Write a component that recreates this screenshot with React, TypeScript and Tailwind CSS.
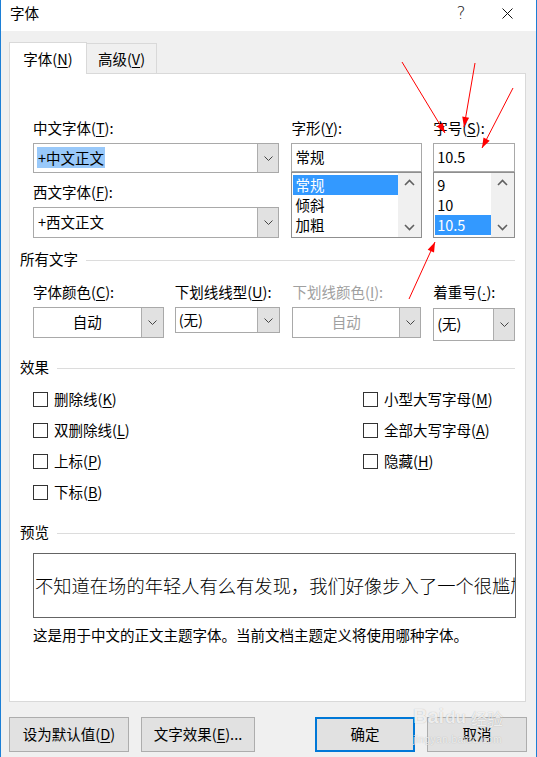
import React from 'react'

const ARROWS: [number, number, number, number][] = [
  [401, 62, 444, 133],
  [474, 63, 463, 127],
  [512, 88, 481, 148],
  [408, 299, 434, 242],
]

function arrowHead(x1: number, y1: number, x2: number, y2: number) {
  const a = Math.atan2(y2 - y1, x2 - x1)
  const len = 10
  const half = 3.5
  const bx = x2 - len * Math.cos(a)
  const by = y2 - len * Math.sin(a)
  const px = -Math.sin(a) * half
  const py = Math.cos(a) * half
  return `${x2},${y2} ${bx + px},${by + py} ${bx - px},${by - py}`
}

function Chevron({ color = '#444' }: { color?: string }) {
  return (
    <svg width="9" height="5" viewBox="0 0 9 5">
      <polyline points="0.5,0.5 4.5,4.5 8.5,0.5" fill="none" stroke={color} strokeWidth="1" />
    </svg>
  )
}

function ScrollArrow({ up }: { up?: boolean }) {
  return (
    <svg width="11" height="7" viewBox="0 0 11 7">
      <polyline
        points={up ? '1,6 5.5,1.5 10,6' : '1,1 5.5,5.5 10,1'}
        fill="none"
        stroke="#606060"
        strokeWidth="1.6"
      />
    </svg>
  )
}

function U({ children }: { children: React.ReactNode }) {
  return <span className="underline underline-offset-2">{children}</span>
}

interface ComboProps {
  className: string
  btn: string
  children?: React.ReactNode
  center?: boolean
  muted?: boolean
}

function Combo({ className, btn, children, center, muted }: ComboProps) {
  return (
    <div className={`flex border border-[#a9a9a9] bg-white ${className}`}>
      <div
        className={`flex-1 flex items-center overflow-hidden pb-px ${center ? 'justify-center' : 'pl-[3px]'} ${
          muted ? 'text-[#a0a0a0]' : ''
        }`}
      >
        {children}
      </div>
      <div className={`flex items-center justify-center border-l border-[#adadad] bg-[#e1e1e1] ${btn}`}>
        <Chevron />
      </div>
    </div>
  )
}

function ListBox({ items, selected, itemW }: { items: string[]; selected: number; itemW: string }) {
  return (
    <div className="flex h-[66px] border border-[#8f8f8f] bg-white">
      <div className={`pt-[2px] pl-px ${itemW}`}>
        {items.map((it, i) => (
          <div
            key={it}
            className={`h-5 leading-[19px] pl-[2px] ${i === selected ? 'bg-[#3399ff] text-white' : ''}`}
          >
            {it}
          </div>
        ))}
      </div>
      <div className="flex-1 flex flex-col items-center justify-between py-[6px] bg-[#f0f0f0]">
        <ScrollArrow up />
        <ScrollArrow />
      </div>
    </div>
  )
}

function Section({ title }: { title: string }) {
  return (
    <div className="flex items-center h-5">
      <span className="leading-[18px] pb-[2px]">{title}</span>
      <div className="ml-2 flex-1 h-px bg-[#dcdcdc]" />
    </div>
  )
}

function Check({ children }: { children: React.ReactNode }) {
  return (
    <div className="flex items-center h-[31px]">
      <div className="w-[15px] h-[15px] border border-[#333] bg-white" />
      <span className="ml-[6px] pb-[2px]">{children}</span>
    </div>
  )
}

function Btn({ className, children }: { className: string; children: React.ReactNode }) {
  return (
    <div className={`flex items-center justify-center h-[35px] pb-[2px] bg-[#e1e1e1] ${className}`}>
      {children}
    </div>
  )
}

export default function App() {
  return (
    <div className="relative w-[537px] h-[757px] overflow-hidden bg-[#f0f0f0] border-x border-[#1c7fd6] font-['Noto_Sans_CJK_SC',sans-serif] text-[14.5px] leading-5 text-black">
      {/* Title bar */}
      <div className="flex items-center h-[31px] bg-white">
        <span className="ml-[9px] pb-[6px]">字体</span>
        <div className="flex-1" />
        <span className="w-[46px] text-center text-[17px] font-['DejaVu_Sans',sans-serif] font-light pb-[6px] text-[#222]">
          ?
        </span>
        <div className="w-[46px] flex justify-center pb-[5px] mr-[6px]">
          <svg width="11" height="11" viewBox="0 0 11 11">
            <line x1="0.5" y1="0.5" x2="10.5" y2="10.5" stroke="#111" strokeWidth="1" />
            <line x1="10.5" y1="0.5" x2="0.5" y2="10.5" stroke="#111" strokeWidth="1" />
          </svg>
        </div>
      </div>

      {/* Tabs */}
      <div className="ml-[8px] mt-[11px] -mb-px flex items-start h-[32px]">
        <div className="relative z-10 w-[78px] h-[32px] flex justify-center pt-[6px] bg-white border-x border-t border-[#d9d9d9]">
          字体(<U>N</U>)
        </div>
        <div className="mt-px w-[70px] h-[30px] flex justify-center pt-[5px] border-r border-t border-[#d9d9d9]">
          高级(<U>V</U>)
        </div>
      </div>

      {/* Panel */}
      <div className="ml-[8px] w-[517px] h-[629px] border border-[#d9d9d9] bg-white px-[10px] pt-[44px]">
        {/* Fonts row */}
        <div className="ml-[13px] flex">
          <div className="w-[247px]">
            <div>中文字体(<U>T</U>):</div>
            <Combo className="mt-[5px] h-[30px]" btn="w-[21px]">
              <span className="bg-[#99c9fa] px-px leading-[21px]">+中文正文</span>
            </Combo>
            <div className="mt-[9px]">西文字体(<U>F</U>):</div>
            <Combo className="mt-[5px] h-[31px]" btn="w-[21px]">
              <span className="px-px">+西文正文</span>
            </Combo>
          </div>
          <div className="ml-[12px] w-[131px]">
            <div>字形(<U>Y</U>):</div>
            <div className="mt-[5px] h-[29px] border border-[#a9a9a9] flex items-center pl-[3px] pb-px">常规</div>
            <ListBox items={['常规', '倾斜', '加粗']} selected={0} itemW="w-[106px]" />
          </div>
          <div className="ml-[11px] w-[82px]">
            <div>字号(<U>S</U>):</div>
            <div className="mt-[5px] h-[29px] border border-[#a9a9a9] flex items-center pl-[3px] pb-px">10.5</div>
            <ListBox items={['9', '10', '10.5']} selected={2} itemW="w-[57px]" />
          </div>
        </div>

        {/* All text */}
        <div className="mt-[12px]">
          <Section title="所有文字" />
        </div>
        <div className="ml-[13px] mt-[12px] flex items-start">
          <div className="w-[131px]">
            <div>字体颜色(<U>C</U>):</div>
            <Combo className="mt-[5px] h-[31px]" btn="w-[22px]" center>
              自动
            </Combo>
          </div>
          <div className="ml-[11px] w-[106px]">
            <div className="whitespace-nowrap">下划线线型(<U>U</U>):</div>
            <Combo className="mt-[5px] h-[26px]" btn="w-[22px]">
              (无)
            </Combo>
          </div>
          <div className="ml-[12px] w-[129px]">
            <div className="text-[#a0a0a0] whitespace-nowrap">下划线颜色(<U>I</U>):</div>
            <Combo className="mt-[5px] h-[31px]" btn="w-[21px]" center muted>
              自动
            </Combo>
          </div>
          <div className="ml-[12px] w-[82px]">
            <div>
              着重号(<U><span className="font-['Liberation_Sans',sans-serif]">·</span></U>):
            </div>
            <Combo className="mt-[5px] h-[33px] border-[#8a8a8a]" btn="w-[21px]">
              (无)
            </Combo>
          </div>
        </div>

        {/* Effects */}
        <div className="mt-[17px]">
          <Section title="效果" />
        </div>
        <div className="ml-[13px] mt-[6px] flex">
          <div className="w-[330px]">
            <Check>删除线(<U>K</U>)</Check>
            <Check>双删除线(<U>L</U>)</Check>
            <Check>上标(<U>P</U>)</Check>
            <Check>下标(<U>B</U>)</Check>
          </div>
          <div>
            <Check>小型大写字母(<U>M</U>)</Check>
            <Check>全部大写字母(<U>A</U>)</Check>
            <Check>隐藏(<U>H</U>)</Check>
          </div>
        </div>

        {/* Preview */}
        <div className="mt-[15px]">
          <Section title="预览" />
        </div>
        <div className="ml-[13px] mt-[10px] w-[483px] h-[65px] border border-[#646464] flex items-center pl-px pb-px overflow-hidden whitespace-nowrap text-[18.3px] font-light">
          不知道在场的年轻人有么有发现，我们好像步入了一个很尴尬的境地
        </div>
        <div className="ml-[13px] mt-[7px]">这是用于中文的正文主题字体。当前文档主题定义将使用哪种字体。</div>
      </div>

      {/* Buttons */}
      <div className="ml-[8px] mt-[15px] flex">
        <Btn className="w-[120px] border border-[#adadad]">设为默认值(<U>D</U>)</Btn>
        <Btn className="ml-[12px] w-[114px] border border-[#adadad]">文字效果(<U>E</U>)...</Btn>
        <Btn className="ml-[60px] w-[100px] border-2 border-[#0078d7]">确定</Btn>
        <Btn className="ml-[12px] w-[100px] border border-[#adadad]">取消</Btn>
      </div>

      {/* Watermark */}
      <div className="absolute left-[412px] top-[706px] pointer-events-none text-white/80 [text-shadow:0_0_1px_rgba(0,0,0,0.3)] font-['Liberation_Sans',sans-serif]">
        <div className="flex items-end leading-none">
          <span className="text-[20px] font-bold">Bai</span>
          <span className="text-[17px] font-bold ml-px">du</span>
          <span className="text-[16px] ml-[5px] font-['Noto_Sans_CJK_SC',sans-serif]">经验</span>
        </div>
        <div className="mt-[9px] text-[10px] leading-none tracking-[0.5px]">jingyan.baidu.com</div>
      </div>

      {/* Annotation arrows */}
      <svg className="absolute left-0 top-0 pointer-events-none" width="537" height="757">
        {ARROWS.map(([x1, y1, x2, y2], i) => (
          <g key={i}>
            <line x1={x1} y1={y1} x2={x2} y2={y2} stroke="#ff0000" strokeWidth="1" />
            <polygon points={arrowHead(x1, y1, x2, y2)} fill="#ff0000" />
          </g>
        ))}
      </svg>
    </div>
  )
}
